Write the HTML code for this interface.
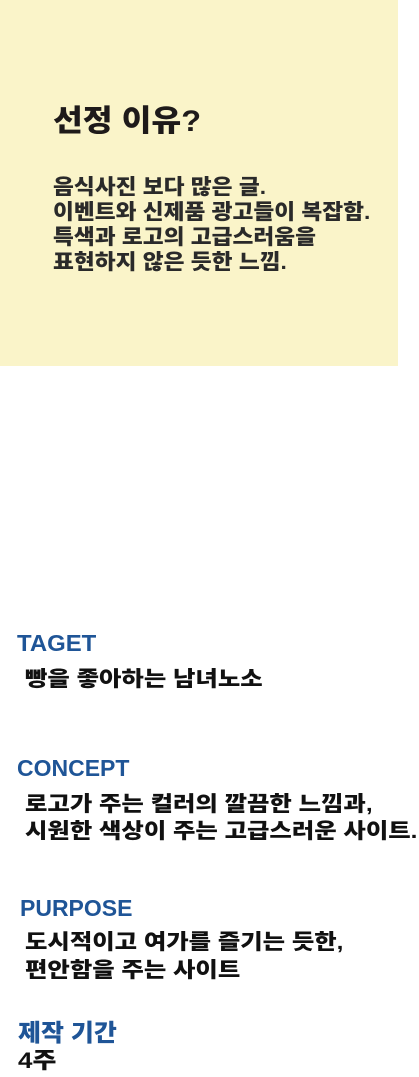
<!DOCTYPE html>
<html><head><meta charset="utf-8"><style>
html,body{margin:0;padding:0;background:#fff;width:419px;height:1077px;overflow:hidden;position:relative}
.t{position:absolute;white-space:nowrap;font-family:"Liberation Sans","Noto Sans CJK KR",sans-serif;font-weight:900;line-height:1;transform-origin:0 0}
.box{position:absolute;left:0;top:0;width:398px;height:366px;background:#faf4c9}
.k{color:#2a2a2a;font-size:21px;transform:scaleX(1.08)}
.b{color:#1f5597;font-size:23px;transform:scaleX(1.0)}
.d{color:#111;font-size:21px;transform:scaleX(1.16)}
</style></head><body>
<div class="box"></div>
<div class="t" style="left:53px;top:107px;font-size:30px;color:#1e1a1a;transform:scaleX(1.08)">선정 이유?</div>
<div class="t k" style="left:53px;top:177px">음식사진 보다 많은 글.</div>
<div class="t k" style="left:53px;top:202px">이벤트와 신제품 광고들이 복잡함.</div>
<div class="t k" style="left:53px;top:227px">특색과 로고의 고급스러움을</div>
<div class="t k" style="left:53px;top:252px">표현하지 않은 듯한 느낌.</div>

<div class="t b" style="left:17px;top:632px;transform:scaleX(1.04)">TAGET</div>
<div class="t d" style="left:25px;top:669px">빵을 좋아하는 남녀노소</div>

<div class="t b" style="left:17px;top:757px">CONCEPT</div>
<div class="t d" style="left:25px;top:794px">로고가 주는 컬러의 깔끔한 느낌과,</div>
<div class="t d" style="left:25px;top:821px">시원한 색상이 주는 고급스러운 사이트.</div>

<div class="t b" style="left:20px;top:897px">PURPOSE</div>
<div class="t d" style="left:25px;top:932px">도시적이고 여가를 즐기는 듯한,</div>
<div class="t d" style="left:25px;top:960px">편안함을 주는 사이트</div>

<div class="t b" style="left:18px;top:1022px;font-size:24px;transform:scaleX(1.04)">제작 기간</div>
<div class="t d" style="left:18px;top:1050px;font-size:22px;transform:scaleX(1.18)">4주</div>
</body></html>
